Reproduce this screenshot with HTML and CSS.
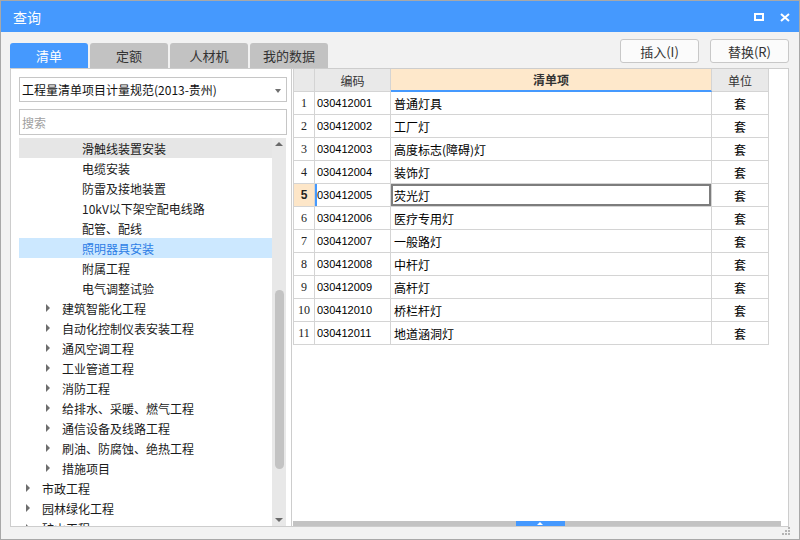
FILE: index.html
```html
<!DOCTYPE html>
<html lang="zh-CN">
<head>
<meta charset="utf-8">
<title>查询</title>
<link rel="stylesheet" href="styles.css">
</head>
<body>
<div class="window">
  <div class="titlebar">
    <span class="title">查询</span>
    <div class="ctrls">
      <svg width="10" height="8" viewBox="0 0 10 8"><rect x="1" y="1" width="8" height="6" fill="none" stroke="#fff" stroke-width="2"/></svg>
      <svg width="10" height="9" viewBox="0 0 10 9"><path d="M1 1L9 8M9 1L1 8" stroke="#fff" stroke-width="2" fill="none"/></svg>
    </div>
  </div>
  <div class="content">
    <div class="toolbar">
      <div class="tabs">
        <div class="tab active">清单</div>
        <div class="tab">定额</div>
        <div class="tab">人材机</div>
        <div class="tab">我的数据</div>
      </div>
      <div class="buttons">
        <button class="btn">插入(I)</button>
        <button class="btn">替换(R)</button>
      </div>
    </div>
    <div class="main">
      <div class="left">
        <div class="select">工程量清单项目计量规范(2013-贵州)<span class="caret"></span></div>
        <div class="search">搜索</div>
        <div class="tree">
          <div class="tree-list">
            <div class="row lv3 hover"><span class="arr none"></span>滑触线装置安装</div>
            <div class="row lv3"><span class="arr none"></span>电缆安装</div>
            <div class="row lv3"><span class="arr none"></span>防雷及接地装置</div>
            <div class="row lv3"><span class="arr none"></span>10kV以下架空配电线路</div>
            <div class="row lv3"><span class="arr none"></span>配管、配线</div>
            <div class="row lv3 sel"><span class="arr none"></span>照明器具安装</div>
            <div class="row lv3"><span class="arr none"></span>附属工程</div>
            <div class="row lv3"><span class="arr none"></span>电气调整试验</div>
            <div class="row lv2"><span class="arr"></span>建筑智能化工程</div>
            <div class="row lv2"><span class="arr"></span>自动化控制仪表安装工程</div>
            <div class="row lv2"><span class="arr"></span>通风空调工程</div>
            <div class="row lv2"><span class="arr"></span>工业管道工程</div>
            <div class="row lv2"><span class="arr"></span>消防工程</div>
            <div class="row lv2"><span class="arr"></span>给排水、采暖、燃气工程</div>
            <div class="row lv2"><span class="arr"></span>通信设备及线路工程</div>
            <div class="row lv2"><span class="arr"></span>刷油、防腐蚀、绝热工程</div>
            <div class="row lv2"><span class="arr"></span>措施项目</div>
            <div class="row lv1"><span class="arr"></span>市政工程</div>
            <div class="row lv1"><span class="arr"></span>园林绿化工程</div>
            <div class="row lv1"><span class="arr"></span>矿山工程</div>
          </div>
          <div class="vscroll">
            <span class="up"></span>
            <span class="thumb"></span>
            <span class="down"></span>
          </div>
        </div>
      </div>
      <div class="right">
        <div class="grid">
          <div class="c h"></div><div class="c h center">编码</div><div class="c h hi center">清单项</div><div class="c h center">单位</div>

          <div class="c n">1</div><div class="c code">030412001</div><div class="c item">普通灯具</div><div class="c u">套</div>
          <div class="c n">2</div><div class="c code">030412002</div><div class="c item">工厂灯</div><div class="c u">套</div>
          <div class="c n">3</div><div class="c code">030412003</div><div class="c item">高度标志(障碍)灯</div><div class="c u">套</div>
          <div class="c n">4</div><div class="c code">030412004</div><div class="c item">装饰灯</div><div class="c u">套</div>
          <div class="c n cur">5</div><div class="c code curcode">030412005</div><div class="c item curitem">荧光灯</div><div class="c u">套</div>
          <div class="c n">6</div><div class="c code">030412006</div><div class="c item">医疗专用灯</div><div class="c u">套</div>
          <div class="c n">7</div><div class="c code">030412007</div><div class="c item">一般路灯</div><div class="c u">套</div>
          <div class="c n">8</div><div class="c code">030412008</div><div class="c item">中杆灯</div><div class="c u">套</div>
          <div class="c n">9</div><div class="c code">030412009</div><div class="c item">高杆灯</div><div class="c u">套</div>
          <div class="c n">10</div><div class="c code">030412010</div><div class="c item">桥栏杆灯</div><div class="c u">套</div>
          <div class="c n">11</div><div class="c code">030412011</div><div class="c item">地道涵洞灯</div><div class="c u">套</div>
        </div>
        <div class="hbar"><span class="handle"></span></div>
      </div>
    </div>
  </div>
  <svg class="grip" width="10" height="9" viewBox="0 0 10 9">
    <rect x="7" y="0" width="2" height="2" fill="#b4b4b4"/>
    <rect x="4" y="3" width="2" height="2" fill="#b4b4b4"/>
    <rect x="7" y="3" width="2" height="2" fill="#b4b4b4"/>
    <rect x="1" y="6" width="2" height="2" fill="#b4b4b4"/>
    <rect x="4" y="6" width="2" height="2" fill="#b4b4b4"/>
    <rect x="7" y="6" width="2" height="2" fill="#b4b4b4"/>
  </svg>
</div>
</body>
</html>
```

FILE: styles.css
```css
* { box-sizing: border-box; }
html, body { margin: 0; padding: 0; }
body {
  font-family: "Noto Sans CJK SC", "Noto Sans", sans-serif;
  background: #f2f2f2;
}
.window {
  position: relative;
  width: 800px;
  height: 540px;
  border: 1px solid #a8a8a8;
  background: #f2f2f2;
  overflow: hidden;
}
.titlebar {
  height: 31px;
  background: #4599fe;
  display: flex;
  align-items: center;
  padding: 0 9px 0 12px;
}
.title {
  color: #fff;
  font-size: 14px;
  line-height: 1;
}
.ctrls {
  margin-left: auto;
  display: flex;
  align-items: center;
  gap: 16px;
  padding-top: 1px;
}
.ctrls svg { display: block; }
.content {
  padding: 0 10px 0 9px;
}
.toolbar {
  margin-top: 7px;
  height: 29px;
  display: flex;
  justify-content: space-between;
}
.tabs {
  align-self: flex-end;
  display: flex;
  gap: 2px;
}
.tab {
  width: 78px;
  height: 25px;
  background: #c2c2c2;
  border-radius: 3px 3px 0 0;
  color: #333;
  font-size: 13px;
  display: flex;
  align-items: center;
  justify-content: center;
}
.tab.active {
  background: #4599fe;
  color: #fff;
}
.buttons {
  display: flex;
  gap: 11px;
  align-items: flex-start;
}
.btn {
  width: 79px;
  height: 24px;
  margin: 0;
  padding: 0;
  border: 1px solid #c8c8c8;
  border-radius: 3px;
  background: #fbfbfb;
  color: #333;
  font-family: "Noto Sans CJK SC", "Noto Sans", sans-serif;
  font-size: 13px;
}
.main {
  height: 459px;
  display: flex;
}
.left {
  width: 282px;
  background: #fff;
  border: 1px solid #cdcdcd;
  padding: 8px 4px 0 8px;
  display: flex;
  flex-direction: column;
}
.select {
  position: relative;
  height: 25px;
  border: 1px solid #c6c6c6;
  background: #fff;
  font-size: 12px;
  color: #111;
  padding-left: 2px;
  display: flex;
  align-items: center;
}
.caret {
  position: absolute;
  right: 5px;
  top: 11px;
  width: 0;
  height: 0;
  border-left: 3px solid transparent;
  border-right: 3px solid transparent;
  border-top: 4px solid #707070;
}
.search {
  margin-top: 7px;
  height: 26px;
  border: 1px solid #c6c6c6;
  font-size: 12px;
  color: #a0a0a0;
  padding-left: 2px;
  display: flex;
  align-items: center;
}
.tree {
  margin-top: 3px;
  flex: 1;
  display: flex;
  overflow: hidden;
}
.tree-list {
  width: 253px;
  overflow: hidden;
}
.row {
  height: 20px;
  display: flex;
  align-items: center;
  font-size: 12px;
  color: #1a1a1a;
  white-space: nowrap;
}
.row.hover { background: #e6e6e6; }
.row.sel { background: #cce8ff; color: #2d7de6; }
.lv1 { padding-left: 7px; }
.lv2 { padding-left: 27px; }
.lv3 { padding-left: 47px; }
.arr {
  width: 16px;
  height: 8px;
  flex: none;
  position: relative;
}
.arr::before {
  content: "";
  position: absolute;
  left: 0;
  top: 0;
  border-left: 4px solid #6e6e6e;
  border-top: 4px solid transparent;
  border-bottom: 4px solid transparent;
}
.arr.none::before { display: none; }
.vscroll {
  width: 14px;
  background: #e8e8e8;
  position: relative;
}
.up, .down {
  position: absolute;
  left: 3px;
  width: 0;
  height: 0;
  border-left: 4px solid transparent;
  border-right: 4px solid transparent;
}
.up { top: 4px; border-bottom: 4px solid #6a6a6a; }
.down { bottom: 4px; border-top: 4px solid #6a6a6a; }
.thumb {
  position: absolute;
  left: 3px;
  top: 152px;
  width: 9px;
  height: 179px;
  border-radius: 5px;
  background: #c3c3c3;
}
.right {
  flex: 1;
  background: #fff;
  border: 1px solid #cdcdcd;
  border-left: none;
  padding-left: 1px;
  display: flex;
  flex-direction: column;
}
.grid {
  display: grid;
  grid-template-columns: 21px 76px 321px 57px;
  grid-auto-rows: 23px;
  width: max-content;
  border-left: 1px solid #d2d2d2;
}
.c {
  border-right: 1px solid #d4d4d4;
  border-bottom: 1px solid #d4d4d4;
  font-size: 12px;
  color: #000;
  display: flex;
  align-items: center;
  white-space: nowrap;
  overflow: hidden;
}
.h {
  background: #e9e9e9;
  color: #333;
  font-size: 12px;
}
.h.hi {
  background: #fee8cb;
  border-bottom: 2px solid #4599fe;
  font-weight: bold;
  color: #333;
}
.center { justify-content: center; }
.n {
  justify-content: center;
  font-family: "Liberation Serif", serif;
  font-size: 12px;
  color: #222;
}
.n.cur {
  background: #fde6c8;
  font-family: "Liberation Sans", sans-serif;
  font-weight: bold;
}
.code {
  padding-left: 2px;
  font-family: "Liberation Sans", sans-serif;
  font-size: 11px;
}
.curcode { box-shadow: inset 2px 0 0 #4599fe; }
.item { padding-left: 3px; }
.curitem { box-shadow: inset 0 0 0 2px #7d7d7d; }
.u { justify-content: center; }
.hbar {
  margin-top: auto;
  margin-right: 7px;
  height: 5px;
  background: #c3c3c3;
  position: relative;
}
.handle {
  position: absolute;
  left: 223px;
  top: 0;
  width: 49px;
  height: 5px;
  background: #4599fe;
}
.handle::after {
  content: "";
  position: absolute;
  left: 21px;
  top: 1px;
  border-left: 3px solid transparent;
  border-right: 3px solid transparent;
  border-bottom: 3px solid #fff;
}
.grip {
  position: absolute;
  right: 8px;
  bottom: 3px;
}
```
